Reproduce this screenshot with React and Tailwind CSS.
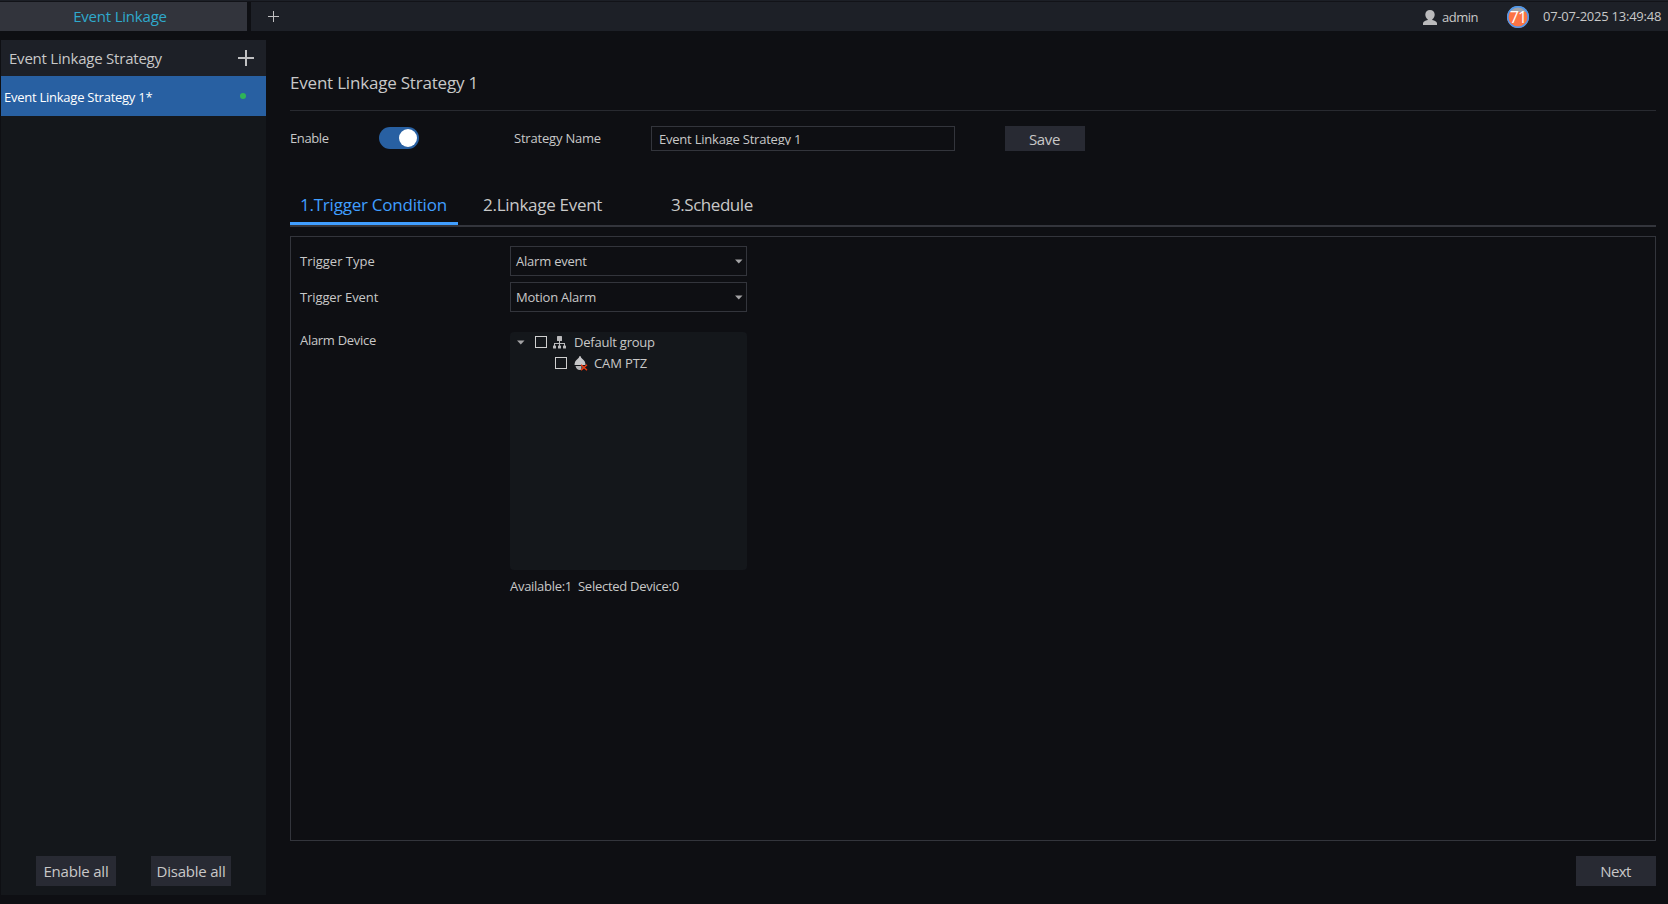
import React from "react";

function Label({ children, track = "tracking-[-0.22px]", className = "" }) {
  return (
    <span className={`block whitespace-nowrap text-[13px] leading-5 ${track} ${className}`}>
      {children}
    </span>
  );
}

function Button({ children, className = "" }) {
  return (
    <button
      className={`flex w-20 shrink-0 items-center justify-center bg-[#282a33] text-[15px] leading-5 text-[#c8c8c8] whitespace-nowrap ${className}`}
    >
      {children}
    </button>
  );
}

function Caret() {
  return (
    <svg width="8" height="5" viewBox="0 0 8 5" className="block shrink-0">
      <path d="M0 0.5h7.500L3.750 4.500z" fill="#a3a3a5" />
    </svg>
  );
}

function Select({ value }) {
  return (
    <div className="flex h-[30px] w-[237px] items-center justify-between border border-[#33353c] pl-[5px] pr-[3px]">
      <Label>{value}</Label>
      <Caret />
    </div>
  );
}

function Checkbox() {
  return <span className="block size-3 shrink-0 border border-[#cfcfcf]" />;
}

function PlusIcon({ size, stroke }) {
  return (
    <svg width={size} height={size} viewBox={`0 0 ${size} ${size}`} className="block shrink-0">
      <path
        d={`M${size / 2} 0V${size}M0 ${size / 2}H${size}`}
        stroke="#c0c0c2"
        strokeWidth={stroke}
        fill="none"
      />
    </svg>
  );
}

function UserIcon() {
  return (
    <svg width="14" height="15" viewBox="0 0 14 15" className="mt-px block shrink-0">
      <path
        d="M7 0C4.200 0 2.300 1.900 2.300 4.600C2.300 6.700 3.300 8.500 4.700 9.300V10C2.200 10.500 0.300 11.500 0 13.200V15H14V13.200C13.700 11.500 11.800 10.500 9.300 10V9.300C10.700 8.500 11.700 6.700 11.700 4.600C11.700 1.900 9.800 0 7 0Z"
        fill="#bababc"
      />
    </svg>
  );
}

function GroupIcon() {
  return (
    <svg width="13" height="13" viewBox="0 0 13 13" className="block shrink-0" fill="#b9b9bb">
      <rect x="4" y="0" width="5" height="5" rx="0.5" />
      <path d="M6 5h1v2h5v3h-1V8H7v2H6V8H2v2H1V7h5z" />
      <rect x="0" y="9.500" width="3" height="3" rx="0.600" />
      <rect x="5" y="9.500" width="3" height="3" rx="0.600" />
      <rect x="10" y="9.500" width="3" height="3" rx="0.600" />
    </svg>
  );
}

function CameraIcon() {
  return (
    <svg width="14" height="15" viewBox="0 0 14 15" className="block shrink-0">
      <path
        d="M4.800 1.800Q5 0 6 0Q7 0 7.200 1.800L8.500 3Q11.500 5 11.500 9H0.500Q0.500 5 3.500 3Z"
        fill="#c6c6c8"
      />
      <path d="M1.500 10H10Q9.500 14 5.800 14Q2.500 14 1.500 10Z" fill="#b5b5b7" />
      <path d="M7 9h6.500V15H7z" fill="#14181c" opacity="0.6" />
      <path d="M7 8.800L13 14.200M13 8.800L7 14.200" stroke="#ee3a10" strokeWidth="1.500" />
    </svg>
  );
}

function Header() {
  return (
    <header className="flex h-[31px] shrink-0 flex-col">
      <div className="h-px bg-[#1c1f26]" />
      <div className="h-px bg-[#121318]" />
      <div className="flex h-[29px]">
        <div className="flex w-[247px] items-center justify-center bg-[#32343c] pr-[7px]">
          <span className="-mt-0.5 whitespace-nowrap text-[15px] leading-5 tracking-[-0.2px] text-[#2fa9cc]">
            Event Linkage
          </span>
        </div>
        <div className="ml-1 flex flex-1 items-center bg-[#1d2027] pl-[17px] pr-[7px]">
          <PlusIcon size={11} stroke={1} />
          <div className="ml-auto flex items-center">
            <UserIcon />
            <Label className="ml-[5px] w-[65px] pt-px" track="tracking-[-0.5px]">
              admin
            </Label>
            <div className="flex size-[22px] items-center justify-center rounded-full bg-[linear-gradient(#a0a2a8_0_27%,#fc7444_27%)] shadow-[inset_0_0_0_1.5px_#4a97f0]">
              <span className="text-base leading-5 tracking-[-0.9px] text-white">71</span>
            </div>
            <Label className="-mt-0.5 ml-[14px] w-[118px]" track="tracking-[-0.24px]">
              07-07-2025 13:49:48
            </Label>
          </div>
        </div>
      </div>
    </header>
  );
}

function Sidebar() {
  return (
    <aside className="ml-px flex w-[265px] shrink-0 flex-col bg-[#14171b]">
      <div className="flex h-9 items-center justify-between bg-[#1d2027] pl-2 pr-3">
        <span className="whitespace-nowrap text-[15px] leading-5 tracking-[-0.22px]">
          Event Linkage Strategy
        </span>
        <PlusIcon size={16} stroke={2} />
      </div>
      <div className="flex h-10 items-center justify-between bg-[#2860a2] pl-[3px] pr-5">
        <Label className="pt-px text-white" track="tracking-[-0.25px]">
          Event Linkage Strategy 1*
        </Label>
        <span className="block size-1.5 rounded-full bg-[#2fb457]" />
      </div>
      <div className="mb-[9px] mt-auto flex gap-[35px] pl-[35px]">
        <Button className="h-[30px] tracking-[-0.2px]">Enable all</Button>
        <Button className="h-[30px] tracking-[-0.22px]">Disable all</Button>
      </div>
    </aside>
  );
}

function Tabs() {
  return (
    <nav className="mt-[44px] h-8 border-b-2 border-[#33353c] text-[17px] leading-6 tracking-[-0.32px] whitespace-nowrap">
      <div className="flex h-[30px]">
        <div className="h-[30px] w-[168px] border-b-[3px] border-[#409eff] pl-[10px] tracking-[-0.23px] text-[#409eff]">
          <span className="-mt-0.5 block">1.Trigger Condition</span>
        </div>
        <div className="w-[188px] pl-[25px] tracking-[-0.28px]">
          <span className="-mt-0.5 block">2.Linkage Event</span>
        </div>
        <div className="pl-[25px] tracking-[-0.45px]">
          <span className="-mt-0.5 block">3.Schedule</span>
        </div>
      </div>
    </nav>
  );
}

function DeviceTree() {
  return (
    <div className="h-[238px] w-[237px] rounded-sm bg-[#14171b]">
      <div className="flex h-5 items-center pl-[7px]">
        <Caret />
        <div className="ml-[10px]">
          <Checkbox />
        </div>
        <div className="ml-1.5 mt-px">
          <GroupIcon />
        </div>
        <Label className="ml-2">Default group</Label>
      </div>
      <div className="flex h-[22px] items-center pl-[45px]">
        <Checkbox />
        <div className="ml-[7px]">
          <CameraIcon />
        </div>
        <Label className="ml-1.5" track="tracking-[-0.1px]">
          CAM PTZ
        </Label>
      </div>
    </div>
  );
}

function TriggerPanel() {
  return (
    <section className="mt-[9px] h-[605px] border border-[#33353c] pl-[9px] pt-[9px]">
      <div className="flex h-[30px] items-center">
        <Label className="w-[210px]" track="tracking-[0px]">
          Trigger Type
        </Label>
        <Select value="Alarm event" />
      </div>
      <div className="mt-1.5 flex h-[30px] items-center">
        <Label className="w-[210px]" track="tracking-[-0.1px]">
          Trigger Event
        </Label>
        <Select value="Motion Alarm" />
      </div>
      <div className="mt-5 flex">
        <Label className="-mt-0.5 w-[210px]" track="tracking-[-0.3px]">
          Alarm Device
        </Label>
        <div>
          <DeviceTree />
          <div className="mt-1.5 flex">
            <Label className="w-[68px]" track="tracking-[-0.28px]">
              Available:1
            </Label>
            <Label track="tracking-[-0.27px]">Selected Device:0</Label>
          </div>
        </div>
      </div>
    </section>
  );
}

export default function App() {
  return (
    <div className="flex h-[904px] w-[1668px] flex-col overflow-hidden bg-[#0e0f13] font-['Open_Sans','Noto_Sans',sans-serif] text-[#c8c8c8]">
      <Header />
      <div className="mb-[9px] mt-[9px] flex min-h-0 flex-1">
        <Sidebar />
        <main className="ml-6 flex w-[1366px] flex-col">
          <h1 className="h-[71px] border-b border-[#282a30] pt-[31px] text-[17px] leading-6 tracking-[-0.2px]">
            Event Linkage Strategy 1
          </h1>
          <div className="mt-[15px] flex h-[25px] items-center">
            <Label className="w-[89px] pb-px" track="tracking-[-0.4px]">
              Enable
            </Label>
            <div className="-mt-px mb-px flex h-[22px] w-10 items-center justify-end rounded-full bg-[#2860a2] pr-0.5">
              <span className="block size-[18px] rounded-full bg-white" />
            </div>
            <Label className="ml-[95px] w-[137px] pb-px" track="tracking-[-0.2px]">
              Strategy Name
            </Label>
            <div className="h-[25px] w-[304px] border border-[#33353c] px-[7px] pt-1">
              <div className="h-[14px] overflow-hidden">
                <Label className="-mt-0.5">Event Linkage Strategy 1</Label>
              </div>
            </div>
            <Button className="ml-[50px] h-[25px] pr-px tracking-[-0.4px]">Save</Button>
          </div>
          <Tabs />
          <TriggerPanel />
          <div className="mt-[15px] flex justify-end">
            <Button className="h-[30px] pr-px tracking-[-0.6px]">Next</Button>
          </div>
        </main>
      </div>
    </div>
  );
}
